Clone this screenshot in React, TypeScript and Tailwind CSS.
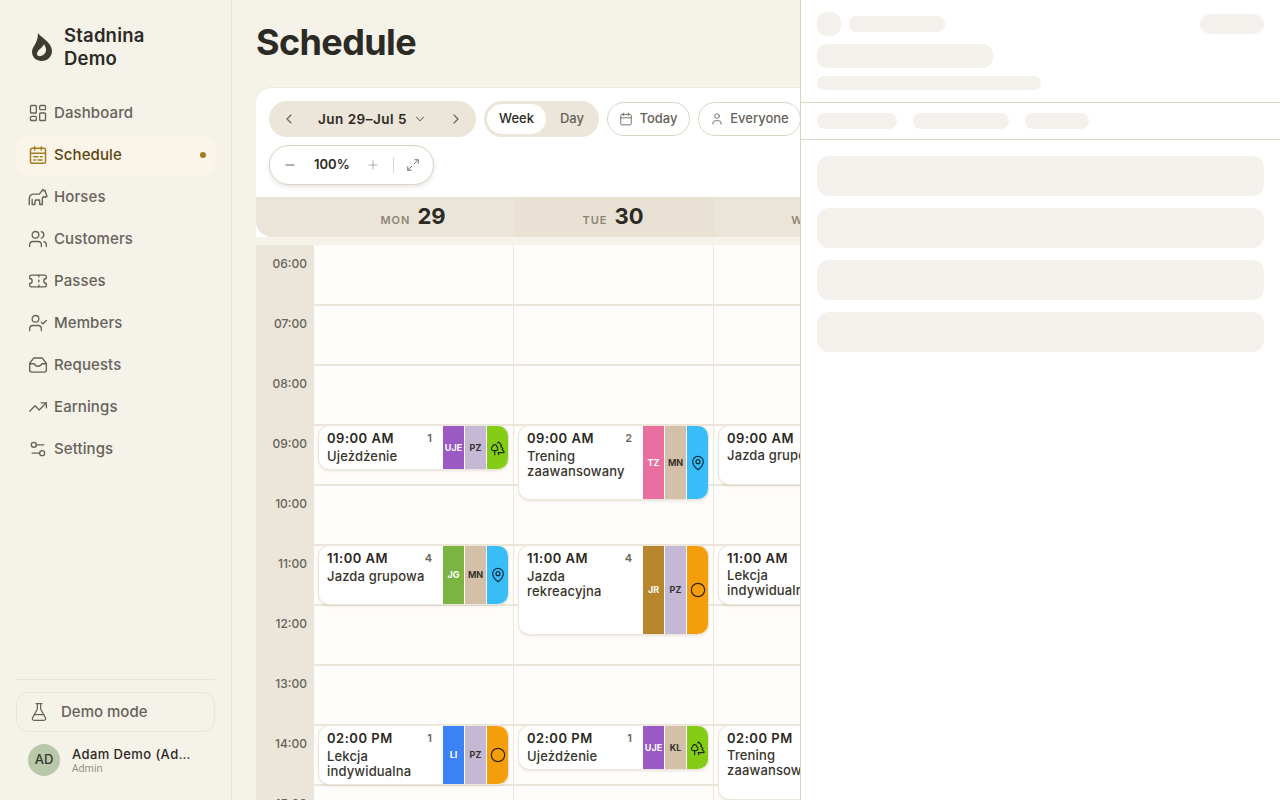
import type { ReactNode } from 'react';
import {
  LayoutDashboard,
  Users,
  Ticket,
  UserCheck,
  TrendingUp,
  Settings2,
  FlaskConical,
  ChevronLeft,
  ChevronRight,
  ChevronDown,
  Calendar,
  User,
  Minus,
  Plus,
  Maximize2,
  Trees,
  MapPin,
  Circle,
} from 'lucide-react';

const FONT = "font-['Inter','Noto_Sans',sans-serif]";

function ScheduleIcon({ className }: { className?: string }) {
  return (
    <svg viewBox="0 0 24 24" fill="none" stroke="currentColor" strokeWidth="1.8" strokeLinecap="round" strokeLinejoin="round" className={className}>
      <rect x="3" y="4" width="18" height="18" rx="2" />
      <path d="M8 2v4M16 2v4M3 10h18M7 14h5M15 14h2M7 18h2M12 18h5" />
    </svg>
  );
}

function HorseIcon({ className }: { className?: string }) {
  return (
    <svg viewBox="0 0 24 24" fill="none" stroke="currentColor" strokeWidth="1.7" strokeLinecap="round" strokeLinejoin="round" className={className}>
      <path d="M1.500 21v-7c0-3.500 2-5.500 5.500-5.500h6.500L18 3l.8 1.500L20.500 4l.8 3.500 1.500 3.500-1.800 1.500-2.500-1-1.300 2V21h-3l-.5-5.500H9L8 21H5v-6" />
    </svg>
  );
}

function TrayIcon({ className }: { className?: string }) {
  return (
    <svg viewBox="0 0 24 24" fill="none" stroke="currentColor" strokeWidth="1.7" strokeLinecap="round" strokeLinejoin="round" className={className}>
      <path d="M7 3.500h10L22 10v8a2.500 2.500 0 0 1-2.500 2.500h-15A2.500 2.500 0 0 1 2 18v-8z" />
      <path d="M2 10.500h5.500c.8 2 2.400 3 4.500 3s3.700-1 4.500-3H22" />
    </svg>
  );
}

type NavItem = { label: string; icon: ReactNode; active?: boolean };

const iconCls = 'w-5 h-5';

const navItems: NavItem[] = [
  { label: 'Dashboard', icon: <LayoutDashboard className={iconCls} strokeWidth={1.6} /> },
  { label: 'Schedule', icon: <ScheduleIcon className={iconCls} />, active: true },
  { label: 'Horses', icon: <HorseIcon className="w-[22px] h-[22px]" /> },
  { label: 'Customers', icon: <Users className={iconCls} strokeWidth={1.6} /> },
  { label: 'Passes', icon: <Ticket className={iconCls} strokeWidth={1.6} /> },
  { label: 'Members', icon: <UserCheck className={iconCls} strokeWidth={1.6} /> },
  { label: 'Requests', icon: <TrayIcon className={iconCls} /> },
  { label: 'Earnings', icon: <TrendingUp className={iconCls} strokeWidth={1.6} /> },
  { label: 'Settings', icon: <Settings2 className={iconCls} strokeWidth={1.6} /> },
];

const hours = ['06:00', '07:00', '08:00', '09:00', '10:00', '11:00', '12:00', '13:00', '14:00', '15:00'];

type Lesson = {
  time: string;
  title: string[];
  count?: number;
  top: number;
  height: number;
  a: string;
  aBg: string;
  b: string;
  bBg: string;
  place: 'trees' | 'pin' | 'ring';
};

const placeBg = { trees: 'bg-[#84cc16]', pin: 'bg-[#38bdf8]', ring: 'bg-[#f59e0b]' };

const columns: Lesson[][] = [
  [
    { time: '09:00 AM', title: ['Ujeżdżenie'], count: 1, top: 181, height: 43, a: 'UJE', aBg: 'bg-[#9b59c4]', b: 'PZ', bBg: 'bg-[#c4b8d4]', place: 'trees' },
    { time: '11:00 AM', title: ['Jazda grupowa'], count: 4, top: 301, height: 58, a: 'JG', aBg: 'bg-[#7cb342]', b: 'MN', bBg: 'bg-[#d4bfa8]', place: 'pin' },
    { time: '02:00 PM', title: ['Lekcja', 'indywidualna'], count: 1, top: 481, height: 58, a: 'LI', aBg: 'bg-[#3b82f6]', b: 'PZ', bBg: 'bg-[#c4b8d4]', place: 'ring' },
  ],
  [
    { time: '09:00 AM', title: ['Trening', 'zaawansowany'], count: 2, top: 181, height: 73, a: 'TZ', aBg: 'bg-[#e86fa0]', b: 'MN', bBg: 'bg-[#d4bfa8]', place: 'pin' },
    { time: '11:00 AM', title: ['Jazda', 'rekreacyjna'], count: 4, top: 301, height: 88, a: 'JR', aBg: 'bg-[#b8862c]', b: 'PZ', bBg: 'bg-[#c4b8d4]', place: 'ring' },
    { time: '02:00 PM', title: ['Ujeżdżenie'], count: 1, top: 481, height: 43, a: 'UJE', aBg: 'bg-[#9b59c4]', b: 'KL', bBg: 'bg-[#d4bfa8]', place: 'trees' },
  ],
  [
    { time: '09:00 AM', title: ['Jazda grupowa'], top: 181, height: 58, a: '', aBg: '', b: '', bBg: '', place: 'pin' },
    { time: '11:00 AM', title: ['Lekcja', 'indywidualna'], top: 301, height: 58, a: '', aBg: '', b: '', bBg: '', place: 'ring' },
    { time: '02:00 PM', title: ['Trening', 'zaawansowany'], top: 481, height: 73, a: '', aBg: '', b: '', bBg: '', place: 'pin' },
  ],
];

function PlaceIcon({ place }: { place: Lesson['place'] }) {
  if (place === 'trees') return <Trees className="w-4 h-4 text-[#1f2a10]" strokeWidth={1.75} />;
  if (place === 'pin') return <MapPin className="w-4 h-4 text-[#10293a]" strokeWidth={1.75} />;
  return <Circle className="w-4 h-4 text-[#33240a]" strokeWidth={1.75} />;
}

function LessonCard({ lesson }: { lesson: Lesson }) {
  return (
    <div
      className="absolute left-[5px] right-[5px] flex overflow-hidden rounded-[10px] bg-white shadow-[0_0_0_1px_#ece5d9,0_2px_3px_rgba(90,70,40,0.14)]"
      style={{ top: lesson.top, height: lesson.height }}
    >
      <div className="flex-1 min-w-0 pl-2 pr-[11px] pt-1">
        <div className="flex items-center justify-between">
          <span className="text-[13px] leading-[16px] font-semibold tracking-[0.5px] text-[#2a2822] whitespace-nowrap">{lesson.time}</span>
          {lesson.count !== undefined && <span className="text-[11px] font-semibold text-[#6b6558]">{lesson.count}</span>}
        </div>
        <div className="mt-[2px] text-[13px] leading-[15px] font-medium tracking-[0.15px] text-[#38352d] whitespace-nowrap">
          {lesson.title.map((line) => (
            <div key={line}>{line}</div>
          ))}
        </div>
      </div>
      {lesson.a !== '' && (
        <div className="flex shrink-0 gap-px">
          <div className={`w-[21px] flex items-center justify-center text-[9px] font-bold text-white ${lesson.aBg}`}>{lesson.a}</div>
          <div className={`w-[21px] flex items-center justify-center text-[9px] font-bold text-[#35322b] ${lesson.bBg}`}>{lesson.b}</div>
          <div className={`w-[21px] flex items-center justify-center ${placeBg[lesson.place]}`}>
            <PlaceIcon place={lesson.place} />
          </div>
        </div>
      )}
    </div>
  );
}

function Skeleton({ className }: { className: string }) {
  return <div className={`bg-[#f4f1ec] ${className}`} />;
}

export default function App() {
  return (
    <div className={`relative flex h-[800px] w-[1280px] overflow-hidden bg-[#f5f2ea] ${FONT}`}>
      {/* sidebar */}
      <aside className="flex w-[232px] shrink-0 flex-col border-r border-[#e8e3d8] px-4">
        <div className="flex items-center gap-3 pl-4 pt-6">
          <svg viewBox="0 0 20 28" className="h-7 w-5 shrink-0 text-[#3d3c33]" fill="currentColor">
            <path
              fillRule="evenodd"
              d="M6 0c2 4 14 9 14 18 0 6-5 10-10 10-6 0-10-4-10-9C0 13 6 11 6 0zm6 11c-.5 3-7 6-7 10 0 1.500 1.500 2.500 3.500 2 3-.5 5.500-3 5.500-6 0-2-.8-4-2-6z"
            />
          </svg>
          <div className="text-[18.500px] font-semibold leading-[23px] tracking-[0.2px] text-[#2c2a24]">
            Stadnina
            <br />
            Demo
          </div>
        </div>

        <nav className="mt-[23px] flex flex-col gap-0.5">
          {navItems.map((item) => (
            <div
              key={item.label}
              className={`flex h-10 items-center rounded-xl pl-3 pr-[8px] text-[15px] font-medium tracking-[0.1px] ${
                item.active ? 'bg-[#fbf5e9] text-[#5c4510]' : 'text-[#67635a]'
              }`}
            >
              <span className={`flex w-5 justify-center ${item.active ? 'text-[#a47a25]' : 'text-[#67635a]'}`}>{item.icon}</span>
              <span className="ml-[6px] flex-1">{item.label}</span>
              {item.active && <span className="mr-px h-1.5 w-1.5 rounded-full bg-[#a47a25]" />}
            </div>
          ))}
        </nav>

        <div className="mt-auto border-t border-[#e8e3d8] pt-3 pb-6">
          <div className="flex h-10 items-center rounded-xl border border-[#ebe6d8] pl-3 text-[15px] font-medium text-[#67635a]">
            <FlaskConical className="h-5 w-5" strokeWidth={1.5} />
            <span className="ml-[12px]">Demo mode</span>
          </div>
          <div className="mt-[12px] flex items-center gap-3 pl-3">
            <div className="flex h-8 w-8 items-center justify-center rounded-full bg-[#bac8a9] text-[13px] font-medium text-[#34382c]">AD</div>
            <div className="min-w-0">
              <div className="w-[122px] truncate text-[13px] font-medium leading-[16px] tracking-[0.4px] text-[#2c2a24]">Adam Demo (Admin)</div>
              <div className="font-['Noto_Sans',sans-serif] text-[10px] leading-[13px] text-[#958f80]">Admin</div>
            </div>
          </div>
        </div>
      </aside>

      {/* main */}
      <main className="min-w-0 flex-1 pl-6">
        <h1 className="pt-[19px] text-[36px] font-bold leading-[46px] tracking-[-0.6px] text-[#2c2a24]">Schedule</h1>

        <div className="mt-[22px] w-[1100px] rounded-t-2xl border-t border-[#ece8de] bg-white">
          {/* toolbar */}
          <div className="w-[545px] pl-[13px] pt-[13px]">
            <div className="flex items-center gap-2">
              <div className="flex h-9 w-[207px] items-center justify-between rounded-full bg-[#ece5d9] px-[12px] text-[#67635a]">
                <ChevronLeft className="h-4 w-4" strokeWidth={1.75} />
                <span className="flex items-center gap-[6px] text-[13.500px] font-semibold tracking-[0.5px] text-[#2c2a24]">
                  Jun 29–Jul 5 <ChevronDown className="h-3.5 w-3.5 text-[#67635a]" strokeWidth={1.75} />
                </span>
                <ChevronRight className="h-4 w-4" strokeWidth={1.75} />
              </div>
              <div className="flex h-9 w-[115px] items-center rounded-full bg-[#ece5d9] p-[3px] text-[13px] font-medium">
                <div className="flex h-[30px] w-[59px] items-center justify-center rounded-full bg-white text-[#2c2a24]">Week</div>
                <div className="flex-1 pl-0.5 text-center text-[#67635a]">Day</div>
              </div>
              <div className="flex h-[34px] w-[83px] items-center justify-center gap-[6px] rounded-full border border-[#dcd4c5] text-[13px] font-medium text-[#67635a]">
                <Calendar className="h-[14px] w-[14px]" strokeWidth={1.5} /> Today
              </div>
              <div className="flex h-[34px] w-[103px] shrink-0 items-center justify-center gap-[6px] rounded-full border border-[#dcd4c5] text-[13px] font-medium text-[#67635a]">
                <User className="h-[14px] w-[14px]" strokeWidth={1.5} /> Everyone
              </div>
            </div>
            <div className="mt-2 flex h-10 w-[165px] items-center rounded-full border border-[#dcd4c5] bg-white pl-[13px] shadow-[0_2px_5px_rgba(90,70,40,0.14)]">
              <Minus className="h-[14px] w-[14px] text-[#67635a]" strokeWidth={1.75} />
              <span className="ml-[17px] text-[13px] font-semibold text-[#2c2a24]">100%</span>
              <Plus className="ml-4 h-[14px] w-[14px] text-[#a8a396]" strokeWidth={1.5} />
              <span className="ml-[13px] h-4 w-px bg-[#dcd4c5]" />
              <Maximize2 className="ml-[12px] h-[14px] w-[14px] text-[#67635a]" strokeWidth={1.5} />
            </div>
          </div>

          {/* day header */}
          <div className="mt-3 flex h-10 rounded-bl-2xl bg-[#ebe4d9]">
            <div className="w-[58px] shrink-0" />
            <div className="flex w-[200px] items-baseline justify-center gap-[7px] pr-0.5 pt-[5px]">
              <span className="text-[11px] font-semibold tracking-[1px] text-[#8d8675]">MON</span>
              <span className="text-[22px] font-bold leading-[28px] text-[#2c2a24]">29</span>
            </div>
            <div className="flex w-[200px] items-baseline justify-center gap-[7px] bg-[#e8e1d4] pr-0.5 pt-[5px]">
              <span className="text-[11px] font-semibold tracking-[1px] text-[#8d8675]">TUE</span>
              <span className="text-[22px] font-bold leading-[28px] text-[#2c2a24]">30</span>
            </div>
            <div className="flex w-[200px] items-baseline justify-center gap-[7px] pt-[5px]">
              <span className="text-[11px] font-semibold tracking-[1px] text-[#8d8675]">WED</span>
              <span className="text-[22px] font-bold leading-[28px] text-[#2c2a24]">1</span>
            </div>
          </div>
        </div>

        {/* time grid */}
        <div className="flex bg-[#f5f2ea] pt-2">
          <div className="w-[58px] shrink-0 bg-[#ece5d9] pt-px">
            {hours.map((h) => (
              <div key={h} className="h-[60px] pr-[7px] pt-[10px] text-right text-[12px] font-medium leading-4 text-[#67635a]">
                {h}
              </div>
            ))}
          </div>
          {columns.map((lessons, i) => (
            <div key={i} className="relative w-[200px] shrink-0 border-r border-[#ece5d9] bg-[#fefdfb] pt-px">
              {hours.map((h) => (
                <div key={h} className="h-[60px] border-b-2 border-[#ece5d9]" />
              ))}
              {lessons.map((lesson) => (
                <LessonCard key={lesson.time} lesson={lesson} />
              ))}
            </div>
          ))}
        </div>
      </main>

      {/* details panel skeleton, overlays the schedule */}
      <section className="absolute inset-y-0 right-0 w-[480px] border-l border-[#dcd4c0] bg-white">
        <div className="h-[103px] border-b border-[#dcd6c8] pl-4 pr-4 pt-3">
          <div className="flex items-center">
            <Skeleton className="h-6 w-6 rounded-[10px]" />
            <Skeleton className="ml-2 h-4 w-24 rounded-lg" />
            <Skeleton className="ml-auto h-5 w-16 rounded-xl" />
          </div>
          <Skeleton className="mt-2 h-6 w-44 rounded-[10px]" />
          <Skeleton className="mt-2 h-3.5 w-56 rounded-lg" />
        </div>
        <div className="flex h-[37px] items-center gap-4 border-b border-[#dcd6c8] px-4">
          <Skeleton className="h-4 w-20 rounded-lg" />
          <Skeleton className="h-4 w-24 rounded-lg" />
          <Skeleton className="h-4 w-16 rounded-lg" />
        </div>
        <div className="flex flex-col gap-3 px-4 pt-4">
          <Skeleton className="h-10 rounded-xl" />
          <Skeleton className="h-10 rounded-xl" />
          <Skeleton className="h-10 rounded-xl" />
          <Skeleton className="h-10 rounded-xl" />
        </div>
      </section>
    </div>
  );
}
